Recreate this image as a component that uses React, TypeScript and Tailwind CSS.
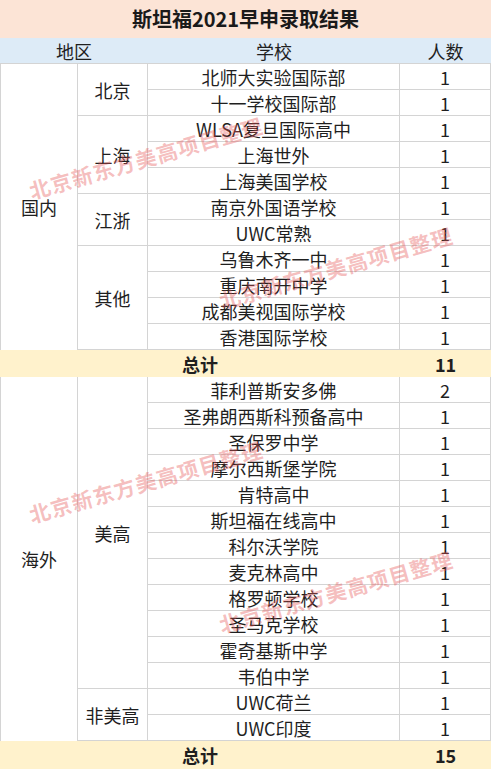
import React from "react";

type Group = { name: string; rows: [string, number][] };

const domestic: Group[] = [
  { name: "北京", rows: [["北师大实验国际部", 1], ["十一学校国际部", 1]] },
  { name: "上海", rows: [["WLSA复旦国际高中", 1], ["上海世外", 1], ["上海美国学校", 1]] },
  { name: "江浙", rows: [["南京外国语学校", 1], ["UWC常熟", 1]] },
  { name: "其他", rows: [["乌鲁木齐一中", 1], ["重庆南开中学", 1], ["成都美视国际学校", 1], ["香港国际学校", 1]] },
];

const overseas: Group[] = [
  {
    name: "美高",
    rows: [
      ["菲利普斯安多佛", 2],
      ["圣弗朗西斯科预备高中", 1],
      ["圣保罗中学", 1],
      ["摩尔西斯堡学院", 1],
      ["肯特高中", 1],
      ["斯坦福在线高中", 1],
      ["科尔沃学院", 1],
      ["麦克林高中", 1],
      ["格罗顿学校", 1],
      ["圣马克学校", 1],
      ["霍奇基斯中学", 1],
      ["韦伯中学", 1],
    ],
  },
  { name: "非美高", rows: [["UWC荷兰", 1], ["UWC印度", 1]] },
];

const spanClass: Record<number, string> = {
  2: "row-span-2",
  3: "row-span-3",
  4: "row-span-4",
  11: "row-span-11",
  12: "row-span-12",
  14: "row-span-14",
};

function Section({ region, groups }: { region: string; groups: Group[] }) {
  const total = groups.reduce((s, g) => s + g.rows.length, 0);
  const cells: React.ReactNode[] = [];
  cells.push(
    <div
      key="region"
      className={`${spanClass[total]} flex items-center justify-center border-l border-r border-[#d4d4d4]`}
    >
      {region}
    </div>
  );
  groups.forEach((g, gi) => {
    g.rows.forEach((r, ri) => {
      if (ri === 0) {
        cells.push(
          <div
            key={`g${gi}`}
            className={`${spanClass[g.rows.length]} flex items-center justify-center border-r border-b border-[#d4d4d4]`}
          >
            {g.name}
          </div>
        );
      }
      cells.push(
        <div key={`s${gi}-${ri}`} className="flex items-center justify-center border-r border-b border-[#d4d4d4]">
          {r[0]}
        </div>
      );
      cells.push(
        <div key={`c${gi}-${ri}`} className="flex items-center justify-center border-r border-b border-[#d4d4d4]">
          {r[1]}
        </div>
      );
    });
  });
  return <div className="grid grid-cols-[78px_70px_252px_91px] auto-rows-[26px]">{cells}</div>;
}

function TotalRow({ value, h }: { value: number; h: string }) {
  return (
    <div className={`grid grid-cols-[400px_91px] ${h} bg-[#fff2cc] font-bold`}>
      <div className="flex items-center justify-center">总计</div>
      <div className="flex items-center justify-center">{value}</div>
    </div>
  );
}

function Watermark({ cls }: { cls: string }) {
  return (
    <div
      className={`pointer-events-none absolute ${cls} -translate-x-1/2 -translate-y-1/2 rotate-[-16deg] whitespace-nowrap text-[21px] font-bold tracking-[1px] text-[rgba(229,85,85,0.38)]`}
    >
      北京新东方美高项目整理
    </div>
  );
}

export default function App() {
  return (
    <div
      className="relative w-[491px] h-[769px] overflow-hidden bg-white text-[18px] leading-none text-[#1f1f1f]"
      style={{ fontFamily: '"Noto Sans CJK SC", "Noto Sans", sans-serif' }}
    >
      <div className="flex h-[38px] items-center justify-center bg-[#fce4d6] text-[20px] font-bold text-[#1a1a1a]">
        斯坦福2021早申录取结果
      </div>
      <div className="grid h-[26px] grid-cols-[148px_252px_91px] bg-[#ddebf7] border-b border-[#d4d4d4]">
        <div className="flex items-center justify-center">地区</div>
        <div className="flex items-center justify-center">学校</div>
        <div className="flex items-center justify-center">人数</div>
      </div>
      <Section region="国内" groups={domestic} />
      <TotalRow value={11} h="h-[27px]" />
      <Section region="海外" groups={overseas} />
      <TotalRow value={15} h="h-[28px]" />

      <Watermark cls="left-[146px] top-[158px]" />
      <Watermark cls="left-[336px] top-[268px]" />
      <Watermark cls="left-[146px] top-[482px]" />
      <Watermark cls="left-[336px] top-[592px]" />
    </div>
  );
}
